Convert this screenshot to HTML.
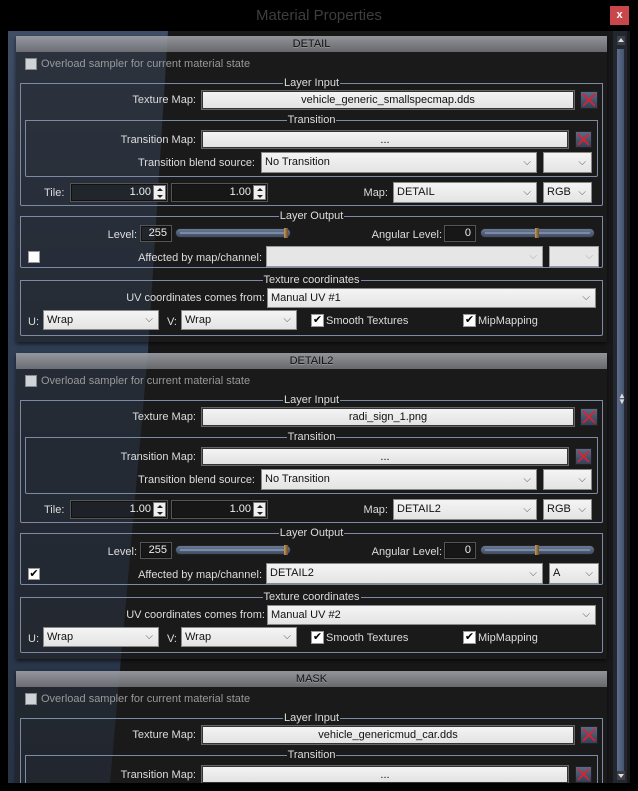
<!DOCTYPE html>
<html><head><meta charset="utf-8">
<style>
*{margin:0;padding:0;box-sizing:border-box}
html,body{overflow:hidden}
body{width:638px;height:791px;background:#000;position:relative;overflow:hidden;font-family:"Liberation Sans",sans-serif;font-size:11px;color:#ddd}
.title{position:absolute;left:0;width:638px;top:7px;text-align:center;font-size:15px;color:#3e3e3e}
.close{position:absolute;left:610px;top:6px;width:19px;height:19px;background:#c8474a;color:#fff;font-size:11px;font-weight:bold;text-align:center;line-height:18px}
.win{position:absolute;left:8px;top:31px;width:622px;height:752px;background:#181818;overflow:hidden}
.blue{position:absolute;left:0;top:0;width:622px;height:752px;background:linear-gradient(180deg,#3f4e66 0%,#303e55 40%,#283345 100%);clip-path:polygon(0 0,160px 0,140px 320px,102px 752px,0 752px)}
.sb{position:absolute;left:605px;top:0;width:14px;height:752px;background:#23272f}
.thumb{position:absolute;left:609px;top:18px;width:7px;height:722px;background:linear-gradient(90deg,#5d6d8c,#44536e)}
.sec{position:absolute;left:8px;width:591px;height:306px;background:rgba(30,30,30,.55);box-shadow:0 2px 4px rgba(0,0,0,.6)}
.hdr{position:absolute;left:0;top:0;width:591px;height:16px;background:linear-gradient(180deg,rgba(175,178,185,.8),rgba(130,130,135,.75));color:#111;text-align:center;font-size:11px;line-height:16px;text-shadow:0 1px 0 rgba(255,255,255,.25)}
.a{position:absolute;white-space:nowrap}
.r{position:absolute;white-space:nowrap;text-align:right}
.grp{position:absolute;border:1px solid #7c8aa6;border-top:none;border-radius:2px}
.lg{position:absolute;top:-7px;left:-1px;right:-1px;display:flex;align-items:center;line-height:14px}
.lg:before,.lg:after{content:"";flex:1;height:1px;background:#7c8aa6;margin-top:1px}
.lg span{padding:0 1px}
.in{position:absolute;background:linear-gradient(180deg,#f4f4f4,#e2e2e2);border:1px solid #333;box-shadow:0 0 0 1px #666;color:#111;text-align:center;line-height:16px;overflow:hidden}
.sel{position:absolute;background:linear-gradient(180deg,#f4f4f4,#e4e4e4);border:1px solid #888;color:#111;padding-left:3px;line-height:19px;overflow:hidden}
.sel i{position:absolute;right:5px;top:0;font-style:normal;color:#555;font-size:10px}
.sel.dis{background:#e6e6e6;border-color:#999}
.sel.dis i{color:#aaa}
.xb{position:absolute;background:linear-gradient(180deg,#5a6a88,#34415a);border:1px solid #222}
.xb svg{position:absolute;left:0;top:0}
.cb{position:absolute;width:12px;height:12px;background:#fff;border:1px solid #999}
.cb.dis{background:#cfd3d8;border-color:#888}
.sp{position:absolute;border:1px solid #555;box-shadow:inset 0 0 0 1px #111;color:#eee;text-align:right;padding-right:16px;line-height:17px;background:rgba(20,20,20,.35)}
.sp b{position:absolute;right:1px;top:1px;width:13px;height:15px;background:#f0f0f0;border:1px solid #777}
.sp b:before{content:"";position:absolute;left:3px;top:2px;border:3px solid transparent;border-bottom:3px solid #222;border-top:0}
.sp b:after{content:"";position:absolute;left:3px;top:9px;border:3px solid transparent;border-top:3px solid #222;border-bottom:0}
.fld{position:absolute;border:1px solid #555;box-shadow:inset 0 0 0 1px #111;color:#eee;text-align:right;padding-right:4px;line-height:15px;font-size:11px;background:rgba(20,20,20,.35)}
.sl{position:absolute;height:10px;border-radius:5px;background:linear-gradient(180deg,#6a7a96,#3f4c64);border:1px solid #222}
.sl:after{content:"";position:absolute;left:4px;right:4px;top:3px;height:2px;background:#7d8aa2}
.tb{position:absolute;top:-1px;width:4px;height:10px;background:linear-gradient(90deg,#c49a60,#6b4b22);z-index:2}
.dim{color:#999}
</style></head><body>
<div class="title">Material Properties</div>
<div class="close">x</div>
<div class="win">
<div class="blue"></div>
<div class="sb"></div>
<div class="thumb"></div>
<div style="position:absolute;left:609px;top:5px;width:8px;height:9px;background:#3a3f48"><div style="position:absolute;left:1px;top:2px;border:3px solid transparent;border-bottom:4px solid #ddd;border-top:0"></div></div>
<div style="position:absolute;left:610px;top:362px;color:#ddd;font-size:8px;line-height:6px">▲<br>▼</div>
<div style="position:absolute;left:609px;top:740px;width:8px;height:9px;background:#3a3f48"><div style="position:absolute;left:1px;top:3px;border:3px solid transparent;border-top:4px solid #ddd;border-bottom:0"></div></div>

<!-- SECTION 1 -->
<div class="sec" style="top:5px">
<div class="hdr">DETAIL</div>
<div class="cb dis" style="left:9px;top:22px"></div><div class="a dim" style="left:25px;top:22px">Overload sampler for current material state</div>
<div class="grp" style="left:4px;top:47px;width:583px;height:123px"><div class="lg"><span>Layer Input</span></div></div>
<div class="r" style="right:411px;top:58px">Texture Map:</div>
<div class="in" style="left:186px;top:55px;width:372px;height:18px">vehicle_generic_smallspecmap.dds</div>
<div class="xb" style="left:564px;top:55px;width:18px;height:18px"><svg width="16" height="16"><path d="M2 2L14 14M14 2L2 14" stroke="#e3202a" stroke-width="1.6"/></svg></div>
<div class="grp" style="left:9px;top:84px;width:573px;height:57px"><div class="lg"><span>Transition</span></div></div>
<div class="r" style="right:411px;top:98px">Transition Map:</div>
<div class="in" style="left:186px;top:95px;width:366px;height:17px">...</div>
<div class="xb" style="left:559px;top:95px;width:17px;height:17px"><svg width="15" height="15"><path d="M2 2L13 13M13 2L2 13" stroke="#e3202a" stroke-width="1.6"/></svg></div>
<div class="r" style="right:352px;top:121px">Transition blend source:</div>
<div class="sel" style="left:245px;top:116px;width:276px;height:21px">No Transition<i>⌵</i></div>
<div class="sel" style="left:527px;top:116px;width:49px;height:21px"><i>⌵</i></div>
<div class="a" style="left:28px;top:151px">Tile:</div>
<div class="sp" style="left:54px;top:147px;width:98px;height:19px">1.00<b></b></div>
<div class="sp" style="left:155px;top:147px;width:97px;height:19px">1.00<b></b></div>
<div class="r" style="right:219px;top:151px">Map:</div>
<div class="sel" style="left:377px;top:146px;width:144px;height:21px">DETAIL<i>⌵</i></div>
<div class="sel" style="left:527px;top:146px;width:49px;height:21px">RGB<i>⌵</i></div>
<div class="grp" style="left:4px;top:180px;width:583px;height:52px"><div class="lg"><span>Layer Output</span></div></div>
<div class="r" style="right:470px;top:193px">Level:</div>
<div class="fld" style="left:124px;top:189px;width:32px;height:17px">255</div>
<div class="sl" style="left:159px;top:192px;width:116px"><div class="tb" style="left:108px"></div></div>
<div class="r" style="right:165px;top:193px">Angular Level:</div>
<div class="fld" style="left:428px;top:189px;width:32px;height:17px">0</div>
<div class="sl" style="left:464px;top:192px;width:115px"><div class="tb" style="left:54px"></div></div>
<div class="cb" style="left:12px;top:215px"></div>
<div class="r" style="right:345px;top:216px">Affected by map/channel:</div>
<div class="sel dis" style="left:250px;top:210px;width:277px;height:21px"><i>⌵</i></div>
<div class="sel dis" style="left:533px;top:210px;width:50px;height:21px"><i>⌵</i></div>
<div class="grp" style="left:4px;top:244px;width:583px;height:56px"><div class="lg"><span>Texture coordinates</span></div></div>
<div class="r" style="right:342px;top:256px">UV coordinates comes from:</div>
<div class="sel" style="left:251px;top:252px;width:329px;height:20px;line-height:18px">Manual UV #1<i>⌵</i></div>
<div class="a" style="left:12px;top:280px">U:</div>
<div class="sel" style="left:27px;top:274px;width:116px;height:20px;line-height:18px">Wrap<i>⌵</i></div>
<div class="a" style="left:151px;top:280px">V:</div>
<div class="sel" style="left:165px;top:274px;width:116px;height:20px;line-height:18px">Wrap<i>⌵</i></div>
<div class="cb" style="left:295px;top:278px;width:13px;height:13px;color:#000;font-size:11px;line-height:11px;text-align:center">✔</div><div class="a" style="left:310px;top:279px">Smooth Textures</div>
<div class="cb" style="left:447px;top:278px;width:13px;height:13px;color:#000;font-size:11px;line-height:11px;text-align:center">✔</div><div class="a" style="left:462px;top:279px">MipMapping</div>
</div>

<!-- SECTION 2 -->
<div class="sec" style="top:322px">
<div class="hdr">DETAIL2</div>
<div class="cb dis" style="left:9px;top:22px"></div><div class="a dim" style="left:25px;top:22px">Overload sampler for current material state</div>
<div class="grp" style="left:4px;top:47px;width:583px;height:123px"><div class="lg"><span>Layer Input</span></div></div>
<div class="r" style="right:411px;top:58px">Texture Map:</div>
<div class="in" style="left:186px;top:55px;width:372px;height:18px">radi_sign_1.png</div>
<div class="xb" style="left:564px;top:55px;width:18px;height:18px"><svg width="16" height="16"><path d="M2 2L14 14M14 2L2 14" stroke="#e3202a" stroke-width="1.6"/></svg></div>
<div class="grp" style="left:9px;top:84px;width:573px;height:57px"><div class="lg"><span>Transition</span></div></div>
<div class="r" style="right:411px;top:98px">Transition Map:</div>
<div class="in" style="left:186px;top:95px;width:366px;height:17px">...</div>
<div class="xb" style="left:559px;top:95px;width:17px;height:17px"><svg width="15" height="15"><path d="M2 2L13 13M13 2L2 13" stroke="#e3202a" stroke-width="1.6"/></svg></div>
<div class="r" style="right:352px;top:121px">Transition blend source:</div>
<div class="sel" style="left:245px;top:116px;width:276px;height:21px">No Transition<i>⌵</i></div>
<div class="sel" style="left:527px;top:116px;width:49px;height:21px"><i>⌵</i></div>
<div class="a" style="left:28px;top:151px">Tile:</div>
<div class="sp" style="left:54px;top:147px;width:98px;height:19px">1.00<b></b></div>
<div class="sp" style="left:155px;top:147px;width:97px;height:19px">1.00<b></b></div>
<div class="r" style="right:219px;top:151px">Map:</div>
<div class="sel" style="left:377px;top:146px;width:144px;height:21px">DETAIL2<i>⌵</i></div>
<div class="sel" style="left:527px;top:146px;width:49px;height:21px">RGB<i>⌵</i></div>
<div class="grp" style="left:4px;top:180px;width:583px;height:52px"><div class="lg"><span>Layer Output</span></div></div>
<div class="r" style="right:470px;top:193px">Level:</div>
<div class="fld" style="left:124px;top:189px;width:32px;height:17px">255</div>
<div class="sl" style="left:159px;top:192px;width:116px"><div class="tb" style="left:108px"></div></div>
<div class="r" style="right:165px;top:193px">Angular Level:</div>
<div class="fld" style="left:428px;top:189px;width:32px;height:17px">0</div>
<div class="sl" style="left:464px;top:192px;width:115px"><div class="tb" style="left:54px"></div></div>
<div class="cb" style="left:12px;top:215px;color:#000;font-size:11px;line-height:10px;text-align:center">✔</div>
<div class="r" style="right:345px;top:216px">Affected by map/channel:</div>
<div class="sel" style="left:250px;top:210px;width:277px;height:21px">DETAIL2<i>⌵</i></div>
<div class="sel" style="left:533px;top:210px;width:50px;height:21px">A<i>⌵</i></div>
<div class="grp" style="left:4px;top:244px;width:583px;height:56px"><div class="lg"><span>Texture coordinates</span></div></div>
<div class="r" style="right:342px;top:256px">UV coordinates comes from:</div>
<div class="sel" style="left:251px;top:252px;width:329px;height:20px;line-height:18px">Manual UV #2<i>⌵</i></div>
<div class="a" style="left:12px;top:280px">U:</div>
<div class="sel" style="left:27px;top:274px;width:116px;height:20px;line-height:18px">Wrap<i>⌵</i></div>
<div class="a" style="left:151px;top:280px">V:</div>
<div class="sel" style="left:165px;top:274px;width:116px;height:20px;line-height:18px">Wrap<i>⌵</i></div>
<div class="cb" style="left:295px;top:278px;width:13px;height:13px;color:#000;font-size:11px;line-height:11px;text-align:center">✔</div><div class="a" style="left:310px;top:279px">Smooth Textures</div>
<div class="cb" style="left:447px;top:278px;width:13px;height:13px;color:#000;font-size:11px;line-height:11px;text-align:center">✔</div><div class="a" style="left:462px;top:279px">MipMapping</div>
</div>

<!-- SECTION 3 -->
<div class="sec" style="top:640px">
<div class="hdr">MASK</div>
<div class="cb dis" style="left:9px;top:22px"></div><div class="a dim" style="left:25px;top:22px">Overload sampler for current material state</div>
<div class="grp" style="left:4px;top:47px;width:583px;height:123px"><div class="lg"><span>Layer Input</span></div></div>
<div class="r" style="right:411px;top:58px">Texture Map:</div>
<div class="in" style="left:186px;top:55px;width:372px;height:18px">vehicle_genericmud_car.dds</div>
<div class="xb" style="left:564px;top:55px;width:18px;height:18px"><svg width="16" height="16"><path d="M2 2L14 14M14 2L2 14" stroke="#e3202a" stroke-width="1.6"/></svg></div>
<div class="grp" style="left:9px;top:84px;width:573px;height:57px"><div class="lg"><span>Transition</span></div></div>
<div class="r" style="right:411px;top:98px">Transition Map:</div>
<div class="in" style="left:186px;top:95px;width:366px;height:17px">...</div>
<div class="xb" style="left:559px;top:95px;width:17px;height:17px"><svg width="15" height="15"><path d="M2 2L13 13M13 2L2 13" stroke="#e3202a" stroke-width="1.6"/></svg></div>
</div>
</div>
</body></html>
